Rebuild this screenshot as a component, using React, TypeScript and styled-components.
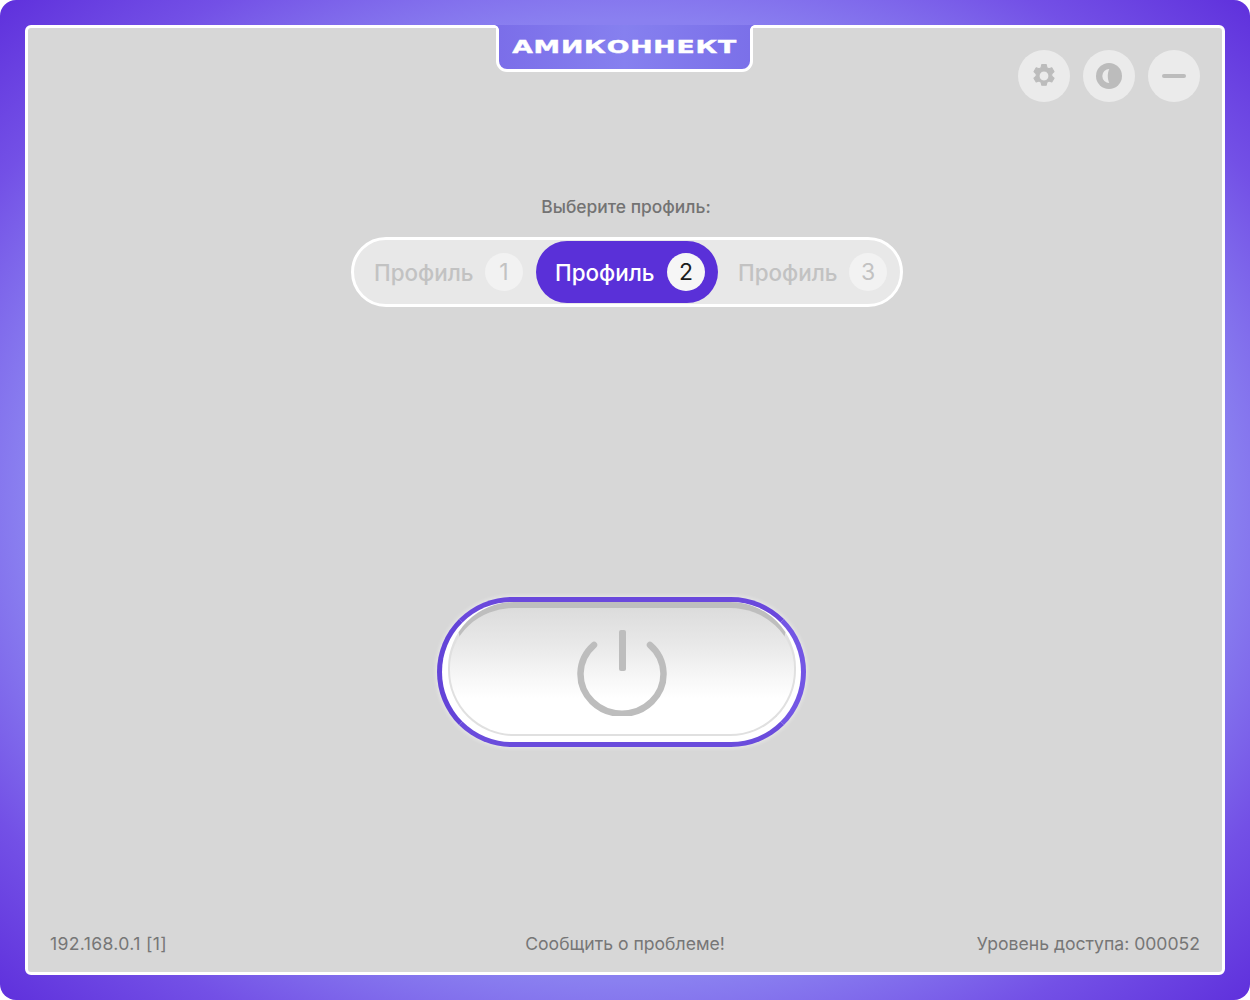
import React from "react";
import styled, { createGlobalStyle } from "styled-components";

const GlobalStyle = createGlobalStyle`
	html, body {
		margin: 0;
		padding: 0;
		background: #ffffff;
		font-family: Inter, "Noto Sans", sans-serif;
	}
`;

const Frame = styled.div`
	width: 1250px;
	height: 1000px;
	box-sizing: border-box;
	padding: 25px;
	border-radius: 16px;
	background: radial-gradient(
		ellipse farthest-corner at center,
		#8d85f2 0%,
		#8a80f0 68%,
		#7350e6 84%,
		#5f30dc 100%
	);
`;

const Panel = styled.main`
	position: relative;
	height: 100%;
	box-sizing: border-box;
	border: 3px solid #ffffff;
	border-radius: 6px;
	background: #d7d7d7;
	display: flex;
	flex-direction: column;
	padding: 22px 22px 16px;
`;

const Tab = styled.div`
	position: absolute;
	top: -3px;
	left: 468px;
	width: 257px;
	height: 47px;
	box-sizing: border-box;
	border: 3px solid #ffffff;
	border-top: none;
	border-radius: 0 0 11px 11px;
	background: linear-gradient(90deg, #7b6ee9 0%, #8680ef 50%, #7b70e9 100%);
	display: flex;
	align-items: center;
	justify-content: center;

	&::before,
	&::after {
		content: "";
		position: absolute;
		top: 0;
		width: 5px;
		height: 5px;
	}
	&::before {
		left: -5px;
		background: radial-gradient(circle at 0 100%, transparent 4.5px, #7b6eea 5.2px);
	}
	&::after {
		right: -5px;
		background: radial-gradient(circle at 100% 100%, transparent 4.5px, #7b6eea 5.2px);
	}
`;

const Brand = styled.span`
	font-family: "DejaVu Sans", sans-serif;
	font-weight: 700;
	font-size: 17px;
	letter-spacing: 0.5px;
	color: #ffffff;
	-webkit-text-stroke: 0.4px #ffffff;
	transform: scaleX(1.57);
	white-space: nowrap;
`;

const WindowControls = styled.div`
	display: flex;
	justify-content: flex-end;
	gap: 13px;
`;

const RoundButton = styled.button`
	width: 52px;
	height: 52px;
	padding: 0;
	border: none;
	border-radius: 50%;
	background: #ebebeb;
	display: flex;
	align-items: center;
	justify-content: center;
`;

const ProfileSection = styled.section`
	margin-top: 95px;
	display: flex;
	flex-direction: column;
	align-items: center;
`;

const ProfileLabel = styled.div`
	margin-left: 2px;
	font-size: 17.4px;
	line-height: 20px;
	font-weight: 500;
	color: #737373;
`;

const ProfileSwitch = styled.div`
	margin: 20px 0 0 4px;
	width: 552px;
	height: 70px;
	box-sizing: border-box;
	border: 3px solid #ffffff;
	border-radius: 35px;
	background: #e8e8e8;
	display: grid;
	grid-template-columns: repeat(3, 182px);
	align-items: center;
`;

const ProfileItem = styled.div<{ $active?: boolean }>`
	height: 62px;
	box-sizing: border-box;
	display: flex;
	align-items: center;
	justify-content: space-between;
	padding: 0 13px 0 ${(p) => (p.$active ? "19px" : "20px")};
	border-radius: 31px;
	font-size: 22.4px;
	font-weight: 500;
	color: ${(p) => (p.$active ? "#ffffff" : "#c2c2c2")};
	background: ${(p) => (p.$active ? "#5a30d8" : "transparent")};
`;

const ProfileNumber = styled.span<{ $active?: boolean }>`
	width: 38px;
	height: 38px;
	border-radius: 50%;
	display: flex;
	align-items: center;
	justify-content: center;
	font-size: 23px;
	font-weight: 400;
	color: ${(p) => (p.$active ? "#1c1c1c" : "#c2c2c2")};
	background: ${(p) => (p.$active ? "#f6f6f6" : "#f2f2f2")};
`;

const PowerArea = styled.div`
	flex: 1;
	display: flex;
	justify-content: center;
	padding: 290px 7px 0 0;
`;

const PowerButton = styled.button`
	width: 369px;
	height: 150px;
	box-sizing: border-box;
	border: 5px solid;
	border-color: #6a48dc #7356e4 #6a4cdc #6344d8;
	border-radius: 75px;
	background: #ffffff;
	box-shadow: 0 0 4px 1px rgba(255, 255, 255, 0.45);
	display: flex;
	align-items: stretch;
	padding: 0 5px 6px 6px;
`;

const PowerFace = styled.div`
	flex: 1;
	border-radius: 66px;
	border: 2px solid #e0e0e0;
	border-top: 6px solid #bebebe;
	box-sizing: border-box;
	background: linear-gradient(180deg, #dcdcdc 0%, #e9e9e9 30%, #f7f7f7 55%, #ffffff 72%);
	display: flex;
	align-items: center;
	justify-content: center;
`;

const Footer = styled.footer`
	display: grid;
	grid-template-columns: 1fr auto 1fr;
	font-size: 17.6px;
	line-height: 24px;
	font-weight: 400;
	color: #767676;

	& > :last-child {
		text-align: right;
	}
`;

const Address = styled.span`
	letter-spacing: 0.35px;
`;

const SettingsIcon = () => (
	<svg width="26" height="26" viewBox="0 0 24 24" fill="#bcbcbc" stroke="#bcbcbc" strokeLinejoin="round">
		<path
			fillRule="evenodd"
			d="M9.900 1.500h4.200l.6 2.800 1.800 1 2.700-.9 2.100 3.600-2.100 1.900v2.200l2.100 1.900-2.100 3.600-2.700-.9-1.800 1-.6 2.800H9.900l-.6-2.800-1.800-1-2.700.9-2.100-3.600 2.100-1.900v-2.200L2.700 8l2.100-3.600 2.700.9 1.800-1zM12 7.400a4.600 4.600 0 1 0 0 9.200 4.600 4.600 0 0 0 0-9.200z"
		/>
	</svg>
);

const ContrastIcon = () => (
	<svg width="26" height="26" viewBox="0 0 26 26">
		<circle cx="13" cy="13" r="13" fill="#bcbcbc" />
		<path d="M13.300 6a7 7 0 0 0 0 14c-1-2-1.500-4.300-1.500-7s.5-5 1.500-7z" fill="#ebebeb" />
	</svg>
);

const MinimizeIcon = () => (
	<svg width="26" height="6" viewBox="0 0 26 6">
		<rect x="1" y="1" width="24" height="4" rx="2" fill="#bcbcbc" />
	</svg>
);

const PowerIcon = () => (
	<svg width="92" height="90" viewBox="0 0 92 90" fill="none" stroke="#bdbdbd" strokeLinecap="round">
		<path d="M18 19A41.500 39.500 0 1 0 74 19" strokeWidth="6.500" />
		<rect x="43" y="4" width="7" height="41" rx="2" fill="#bdbdbd" stroke="none" />
	</svg>
);

const profiles = [1, 2, 3];

export default function App() {
	return (
		<>
			<GlobalStyle />
			<Frame>
				<Panel>
					<Tab>
						<Brand>АМИКОННЕКТ</Brand>
					</Tab>
					<WindowControls>
						<RoundButton>
							<SettingsIcon />
						</RoundButton>
						<RoundButton>
							<ContrastIcon />
						</RoundButton>
						<RoundButton>
							<MinimizeIcon />
						</RoundButton>
					</WindowControls>
					<ProfileSection>
						<ProfileLabel>Выберите профиль:</ProfileLabel>
						<ProfileSwitch>
							{profiles.map((n) => (
								<ProfileItem key={n} $active={n === 2}>
									Профиль
									<ProfileNumber $active={n === 2}>{n}</ProfileNumber>
								</ProfileItem>
							))}
						</ProfileSwitch>
					</ProfileSection>
					<PowerArea>
						<PowerButton>
							<PowerFace>
								<PowerIcon />
							</PowerFace>
						</PowerButton>
					</PowerArea>
					<Footer>
						<Address>192.168.0.1 [1]</Address>
						<span>Сообщить о проблеме!</span>
						<span>Уровень доступа: 000052</span>
					</Footer>
				</Panel>
			</Frame>
		</>
	);
}
